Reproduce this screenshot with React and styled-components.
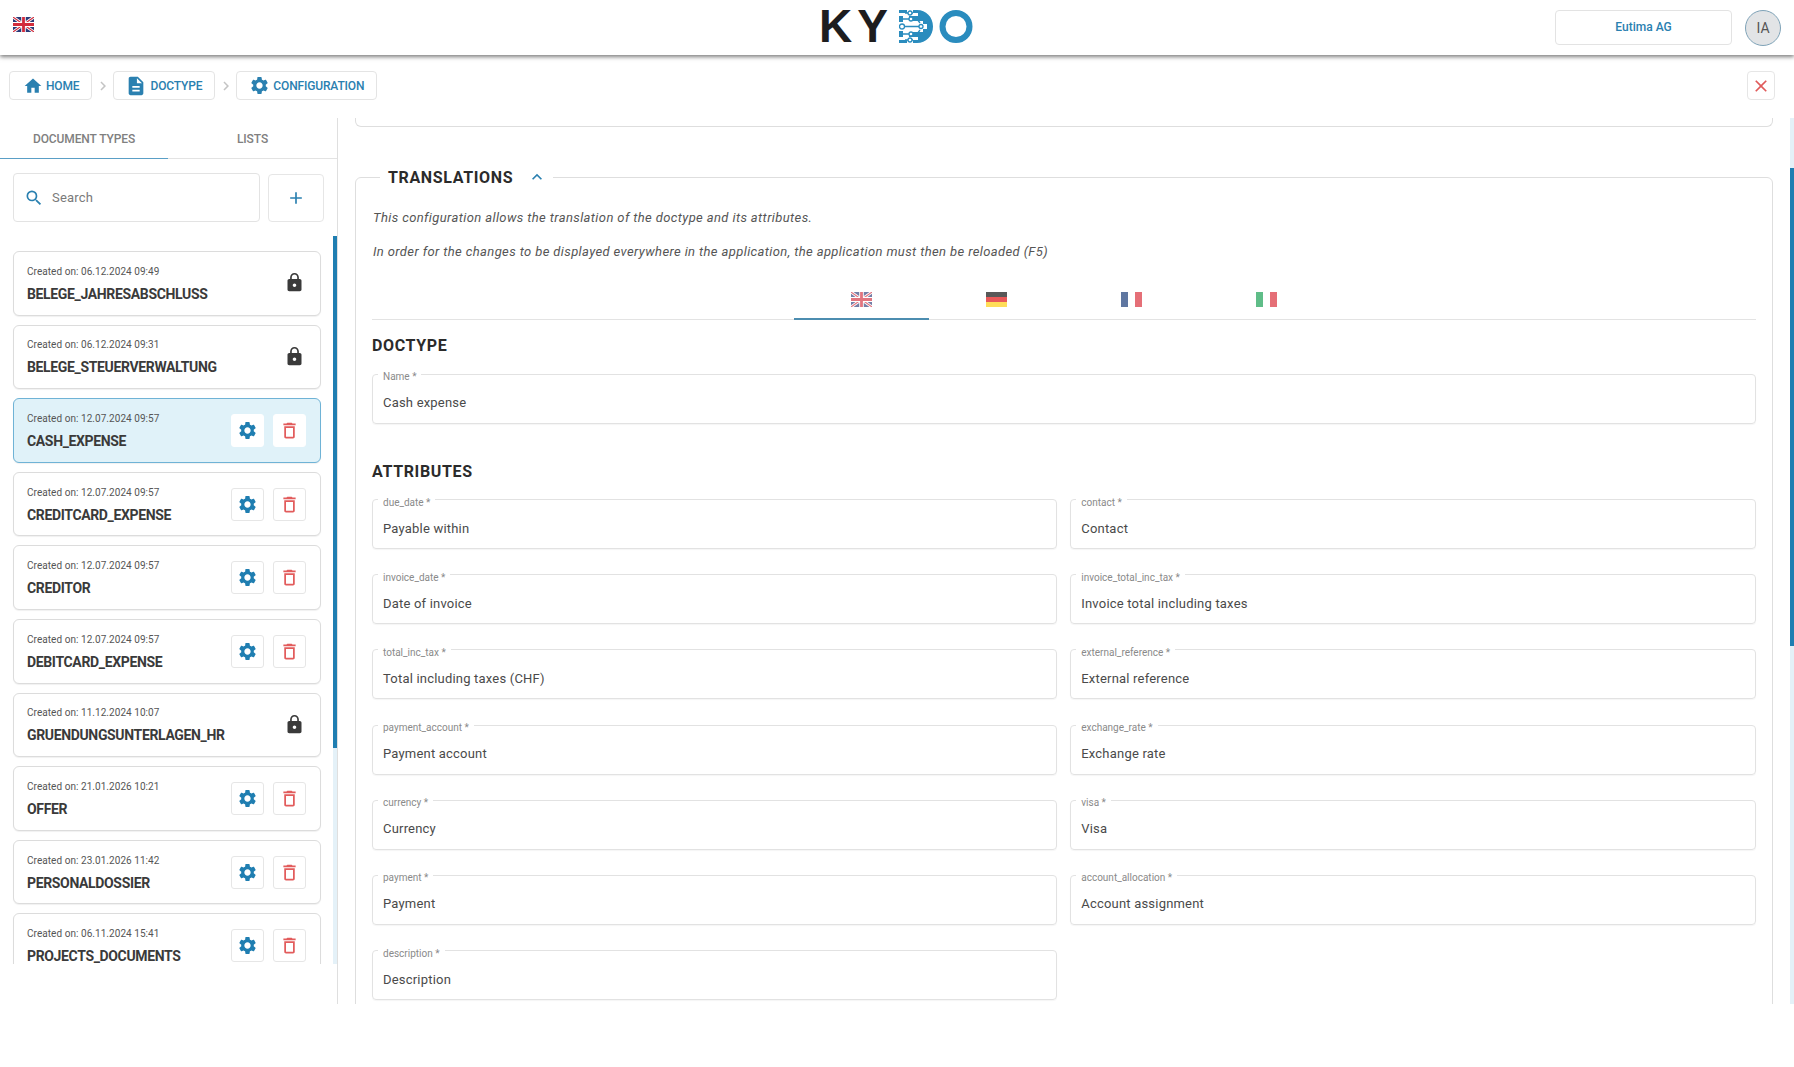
import React from 'react';
import styled, { createGlobalStyle } from 'styled-components';
import { MdHome, MdDescription, MdSettings, MdLock, MdDeleteOutline, MdKeyboardArrowUp, MdSearch, MdAdd, MdClose, MdChevronRight } from 'react-icons/md';

const BLUE = '#2a80b0';
const Global = createGlobalStyle`
  html, body { margin: 0; padding: 0; background: #fff; }
  body { font-family: Roboto, "Liberation Sans", sans-serif; color: #333; }
  * { box-sizing: border-box; }
`;
const Page = styled.div`width: 1794px; height: 1067px; overflow: hidden; background: #fff; display: flex; flex-direction: column;`;
const Header = styled.header`height: 55px; flex: none; display: flex; align-items: center; justify-content: space-between; position: relative; padding: 0 13px 0 13px; background: #fff; box-shadow: 0 2px 4px rgba(0,0,0,.5);`;
const HeaderFlag = styled.div`align-self: flex-start; margin-top: 17px; display: flex;`;
const LogoWrap = styled.div`position: absolute; left: 819px; top: 10px; height: 33px; display: flex; align-items: center;`;
const LogoText = styled.span`width: 80px; font-family: "Liberation Sans", sans-serif; font-weight: 700; font-size: 46px; line-height: 33px; color: #1d1d1f; letter-spacing: 5px;`;
const HeaderRight = styled.div`display: flex; align-items: center; gap: 13px;`;
const Company = styled.button`width: 177px; height: 35px; margin-top: -1px; background: #fff; border: 1px solid #e3e3e3; border-radius: 4px; color: ${BLUE}; font: 500 12px Roboto, sans-serif;`;
const Avatar = styled.div`width: 36px; height: 36px; border-radius: 50%; background: #e2e4e6; border: 1px solid #7fa3b8; color: #555; font-size: 14px; display: flex; align-items: center; justify-content: center;`;
const Crumbs = styled.nav`height: 63px; flex: none; padding: 16px 19px 0 9px; display: flex; align-items: flex-start; justify-content: space-between;`;
const CrumbList = styled.div`display: flex; align-items: center;`;
const Crumb = styled.a`height: 29px; display: flex; align-items: center; gap: 3px; padding: 0 12px 0 ${p => p.$pl}px; border: 1px solid #e4e4e4; border-radius: 4px; color: ${BLUE}; font-size: 12px; font-weight: 500; letter-spacing: -.15px; background: #fff;`;
const Sep = styled.span`width: 21px; height: 29px; display: flex; align-items: center; justify-content: center; color: #c4c4c4;`;
const CloseBtn = styled.button`width: 28px; height: 29px; padding: 0; background: #fff; border: 1px solid #e6e6e6; border-radius: 4px; color: #e05a5a; display: flex; align-items: center; justify-content: center;`;
const Body = styled.div`height: 886px; flex: none; display: flex;`;
const Sidebar = styled.aside`width: 338px; flex: none; border-right: 1px solid #dfdfdf; display: flex; flex-direction: column;`;
const Tabs = styled.div`height: 41px; flex: none; display: flex; border-bottom: 1px solid #e3e3e3;`;
const Tab = styled.div`width: 168px; height: 41px; padding-top: 2px; display: flex; align-items: center; justify-content: center; font-size: 12px; font-weight: 500; letter-spacing: -.1px; color: #808080; border-bottom: 1px solid ${p => p.$active ? '#5a9fc6' : 'transparent'}; &:last-child { width: 169px; }`;
const SearchRow = styled.div`display: flex; gap: 8px; padding: 14px 0 0 13px; height: 77px; flex: none;`;
const SearchBox = styled.div`width: 247px; height: 49px; border: 1px solid #e3e3e3; border-radius: 4px; padding-left: 10px; display: flex; align-items: center; gap: 8px; font-size: 13px; letter-spacing: .2px; color: #7a7a7a;`;
const AddBtn = styled.button`width: 56px; height: 48px; margin-top: 1px; padding: 0; background: #fff; border: 1px solid #e6e6e6; border-radius: 4px; color: ${BLUE}; display: flex; align-items: center; justify-content: center;`;
const ListArea = styled.div`height: 728px; flex: none; display: flex;`;
const List = styled.div`flex: 1; overflow: hidden; padding: 15px 12px 0 13px; display: flex; flex-direction: column; gap: 9px;`;
const Track = styled.div`width: 4px; flex: none; background: #e4f1f8;`;
const Thumb = styled.div`background: #1f7eb1; margin-top: ${p => p.$top}px; height: ${p => p.$h}px;`;
const Card = styled.div`flex: none; height: 64.6px; border: 1px solid ${p => p.$sel ? '#6fb3d6' : '#dcdcdc'}; background: ${p => p.$sel ? '#e0f2f9' : '#fff'}; border-radius: 6px; box-shadow: 0 1px 1px rgba(0,0,0,.06); padding: 0 14px 0 13px; display: flex; align-items: center; justify-content: space-between;`;
const CardText = styled.div`display: flex; flex-direction: column; gap: 7px;`;
const CardDate = styled.div`font-size: 10px; line-height: 14px; letter-spacing: .05px; color: #555;`;
const CardTitle = styled.div`font-size: 14px; line-height: 16px; font-weight: 700; color: #3a3a3a; letter-spacing: -.35px;`;
const CardActions = styled.div`display: flex; gap: 9px;`;
const IconBtn = styled.button`width: 33px; height: 33px; padding: 0; background: #fff; border: 1px solid ${p => p.$sel ? '#fff' : '#e6e6e6'}; border-radius: 3px; color: ${p => p.$c}; display: flex; align-items: center; justify-content: center;`;
const LockIcon = styled(MdLock)`color: #3a3a3a; margin: -1px 1px 0 0;`;
const Main = styled.main`flex: 1; min-width: 0; overflow: hidden; padding: 0 17px 0 17px;`;
const TopCard = styled.div`height: 9px; border: 1px solid #dedede; border-top: none; border-radius: 0 0 6px 6px;`;
const Section = styled.fieldset`margin: 38px 0 0; padding: 0 16.500px 0 16px; border: 1px solid #dedede; border-radius: 6px; height: 900px; min-width: 0;`;
const Legend = styled.legend`margin-left: 8px; padding: 0 6px 0 8px; display: flex; align-items: center; gap: 14px; height: 24px;`;
const LegendTitle = styled.span`font-size: 16px; font-weight: 700; color: #2b2b2b; letter-spacing: .65px;`;
const Chevron = styled(MdKeyboardArrowUp)`color: ${BLUE};`;
const Note = styled.p`margin: 0; font-size: 13px; line-height: 16px; font-style: italic; color: #555; letter-spacing: .385px;`;
const Notes = styled.div`display: flex; flex-direction: column; gap: 18px; padding: 21px 0 0 1px;`;
const LangTabs = styled.div`margin-top: 18px; height: 42px; border-bottom: 1px solid #e3e3e3; padding-left: 422px; display: flex;`;
const LangTab = styled.div`width: 135px; height: 42px; padding-top: 14px; display: flex; justify-content: center; border-bottom: ${p => p.$active ? '2px solid #4c8db0' : 'none'}; svg { opacity: .65; }`;
const Heading = styled.h3`margin: 0; font-size: 16px; line-height: 20px; font-weight: 700; color: #2b2b2b; letter-spacing: .65px;`;
const HeadingOne = styled(Heading)`margin-top: 16px;`;
const HeadingTwo = styled(Heading)`margin-top: 38px;`;
const FieldBox = styled.fieldset`margin: 0; padding: 18px 10px 0; height: 52.5px; border: 1px solid #e2e2e2; border-radius: 4px; box-shadow: 0 1px 1px rgba(0,0,0,.04); min-width: 0; display: flex; align-items: flex-start;`;
const FieldLegend = styled.legend`margin-left: -5px; padding: 0 5px; font-size: 10px; line-height: 12px; height: 6px; color: #8a8a8a;`;
const FieldValue = styled.span`font-size: 13px; line-height: 16px; color: #4a4a4a; letter-spacing: .2px;`;
const NameWrap = styled.div`margin-top: 15px;`;
const Grid = styled.div`margin-top: 15px; display: grid; grid-template-columns: 1fr 1fr; column-gap: 13px; row-gap: 22.7px;`;

const UK = ({ w = 21, h = 15 }) => (
  <svg width={w} height={h} viewBox="0 0 60 40" preserveAspectRatio="none">
    <rect width="60" height="40" fill="#2a3a78" />
    <path d="M0 0L60 40M60 0L0 40" stroke="#fff" strokeWidth="8" />
    <path d="M0 0L60 40M60 0L0 40" stroke="#d22c3c" strokeWidth="3" />
    <path d="M30 0V40M0 20H60" stroke="#fff" strokeWidth="13" />
    <path d="M30 0V40M0 20H60" stroke="#d22c3c" strokeWidth="8" />
  </svg>
);
const DE = () => (
  <svg width="21" height="15" viewBox="0 0 3 3" preserveAspectRatio="none">
    <rect width="3" height="1" fill="#000" /><rect y="1" width="3" height="1" fill="#d00" /><rect y="2" width="3" height="1" fill="#fc0" />
  </svg>
);
const Tri = ({ a, b }) => (
  <svg width="21" height="15" viewBox="0 0 3 3" preserveAspectRatio="none">
    <rect width="1" height="3" fill={a} /><rect x="1" width="1" height="3" fill="#fff" /><rect x="2" width="1" height="3" fill={b} />
  </svg>
);
const LogoMark = styled.svg`margin-right: ${p => p.$mr || 0}px;`;
const LogoD = () => (
  <LogoMark $mr={6} width="34" height="33" viewBox="0 0 34 33">
    <path d="M14 0h4c9 0 16 7 16 16.500S27 33 18 33h-4v-3h5v-3h-9v-5H24v-3h4V14h-4v-3H10V6h9V3h-5z" fill="#2a8cbe" />
    <path d="M0 0h8v3H0zM0 30h8v3H0zM0 6h4v6H0zM0 21h4v6H0z" fill="#2a8cbe" />
    <g fill="none" stroke="#2a8cbe" strokeWidth="1.300">
      <path d="M6 3h8M6 30h8M4 9h14l3 4M4 24h14l3-4M5 16.500h18" />
      <circle cx="11" cy="3" r="2" fill="#fff" />
      <circle cx="11" cy="30" r="2" fill="#fff" />
      <circle cx="3" cy="16.500" r="2.500" fill="#fff" />
      <circle cx="22" cy="16.500" r="2" fill="#fff" />
      <circle cx="12" cy="9" r="2" fill="#fff" />
      <circle cx="12" cy="24" r="2" fill="#fff" />
    </g>
  </LogoMark>
);
const LogoO = () => (
  <LogoMark width="34" height="33" viewBox="0 0 34 33"><circle cx="17" cy="16.500" r="13.500" fill="none" stroke="#2a8cbe" strokeWidth="6" /></LogoMark>
);

const docs = [
  ['06.12.2024 09:49', 'BELEGE_JAHRESABSCHLUSS', true],
  ['06.12.2024 09:31', 'BELEGE_STEUERVERWALTUNG', true],
  ['12.07.2024 09:57', 'CASH_EXPENSE', false, true],
  ['12.07.2024 09:57', 'CREDITCARD_EXPENSE'],
  ['12.07.2024 09:57', 'CREDITOR'],
  ['12.07.2024 09:57', 'DEBITCARD_EXPENSE'],
  ['11.12.2024 10:07', 'GRUENDUNGSUNTERLAGEN_HR', true],
  ['21.01.2026 10:21', 'OFFER'],
  ['23.01.2026 11:42', 'PERSONALDOSSIER'],
  ['06.11.2024 15:41', 'PROJECTS_DOCUMENTS'],
];
const fields = [
  ['due_date', 'Payable within'], ['contact', 'Contact'],
  ['invoice_date', 'Date of invoice'], ['invoice_total_inc_tax', 'Invoice total including taxes'],
  ['total_inc_tax', 'Total including taxes (CHF)'], ['external_reference', 'External reference'],
  ['payment_account', 'Payment account'], ['exchange_rate', 'Exchange rate'],
  ['currency', 'Currency'], ['visa', 'Visa'],
  ['payment', 'Payment'], ['account_allocation', 'Account assignment'],
  ['description', 'Description'],
];
const Field = ({ label, value }) => (
  <FieldBox><FieldLegend>{label} *</FieldLegend><FieldValue>{value}</FieldValue></FieldBox>
);

export default function App() {
  return (
    <Page>
      <Global />
      <Header>
        <HeaderFlag><UK /></HeaderFlag>
        <LogoWrap><LogoText>KY</LogoText><LogoD /><LogoO /></LogoWrap>
        <HeaderRight><Company>Eutima AG</Company><Avatar>IA</Avatar></HeaderRight>
      </Header>
      <Crumbs>
        <CrumbList>
          <Crumb $pl={13}><MdHome size={20} />HOME</Crumb>
          <Sep><MdChevronRight size={18} /></Sep>
          <Crumb $pl={11}><MdDescription size={22} />DOCTYPE</Crumb>
          <Sep><MdChevronRight size={18} /></Sep>
          <Crumb $pl={12}><MdSettings size={21} />CONFIGURATION</Crumb>
        </CrumbList>
        <CloseBtn><MdClose size={20} /></CloseBtn>
      </Crumbs>
      <Body>
        <Sidebar>
          <Tabs><Tab $active>DOCUMENT TYPES</Tab><Tab>LISTS</Tab></Tabs>
          <SearchRow>
            <SearchBox><MdSearch size={20} color={BLUE} />Search</SearchBox>
            <AddBtn><MdAdd size={20} /></AddBtn>
          </SearchRow>
          <ListArea>
            <List>
              {docs.map(([d, t, locked, sel]) => (
                <Card key={t} $sel={sel}>
                  <CardText><CardDate>Created on: {d}</CardDate><CardTitle>{t}</CardTitle></CardText>
                  {locked ? <LockIcon size={21} /> : (
                    <CardActions>
                      <IconBtn $sel={sel} $c="#1f7eb1"><MdSettings size={21} /></IconBtn>
                      <IconBtn $sel={sel} $c="#e25c5c"><MdDeleteOutline size={21} /></IconBtn>
                    </CardActions>
                  )}
                </Card>
              ))}
            </List>
            <Track><Thumb $top={0} $h={512} /></Track>
          </ListArea>
        </Sidebar>
        <Main>
          <TopCard />
          <Section>
            <Legend><LegendTitle>TRANSLATIONS</LegendTitle><Chevron size={20} /></Legend>
            <Notes>
              <Note>This configuration allows the translation of the doctype and its attributes.</Note>
              <Note>In order for the changes to be displayed everywhere in the application, the application must then be reloaded (F5)</Note>
            </Notes>
            <LangTabs>
              <LangTab $active><UK /></LangTab>
              <LangTab><DE /></LangTab>
              <LangTab><Tri a="#0a2f70" b="#d8232f" /></LangTab>
              <LangTab><Tri a="#0a9a4a" b="#d8232f" /></LangTab>
            </LangTabs>
            <HeadingOne>DOCTYPE</HeadingOne>
            <NameWrap><Field label="Name" value="Cash expense" /></NameWrap>
            <HeadingTwo>ATTRIBUTES</HeadingTwo>
            <Grid>{fields.map(([l, v]) => <Field key={l} label={l} value={v} />)}</Grid>
          </Section>
        </Main>
        <Track><Thumb $top={50} $h={478} /></Track>
      </Body>
    </Page>
  );
}
